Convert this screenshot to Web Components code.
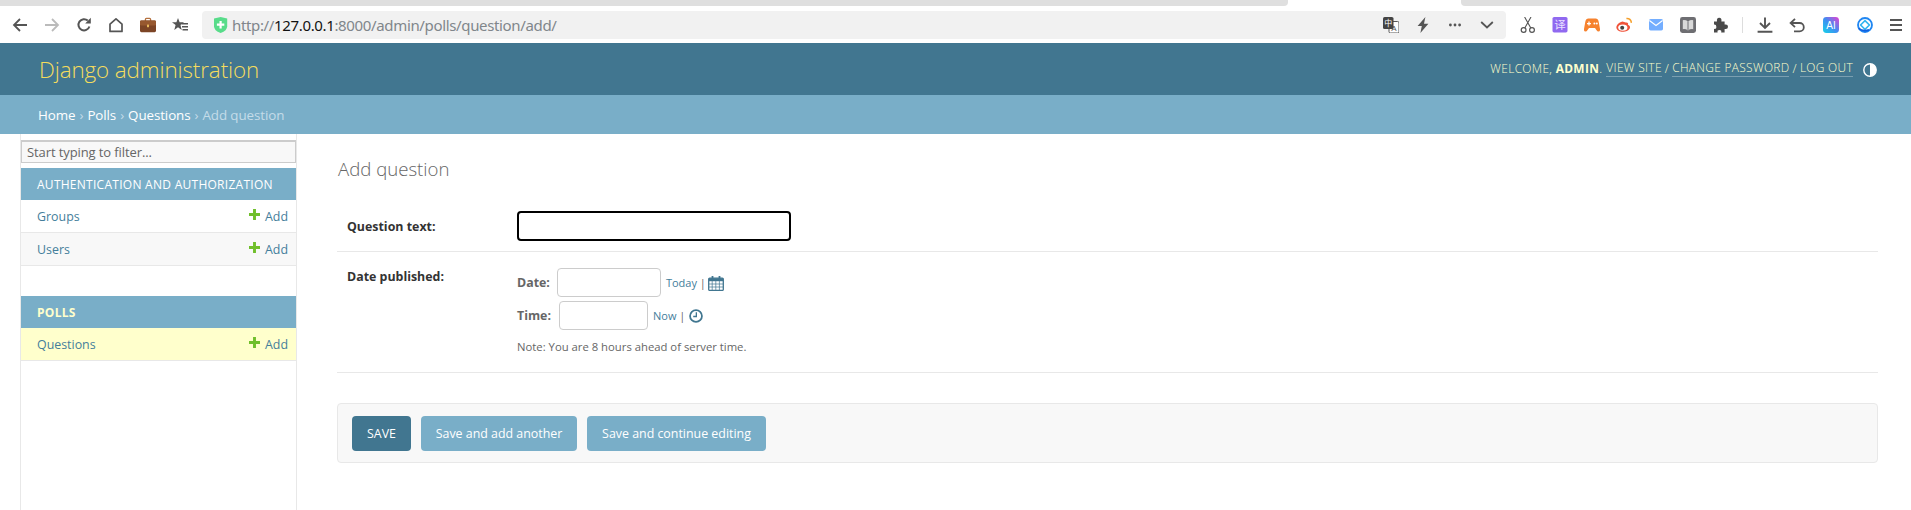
<!DOCTYPE html>
<html lang="en">
<head>
<meta charset="utf-8">
<title>Add question | Django site admin</title>
<style>
  html, body { margin: 0; height: 510px; overflow: hidden; background: #fff; }
  body { font-family: "Open Sans", "Noto Sans CJK SC", sans-serif; font-size: 13px; color: #333; }
  .title { margin: 0 0 20px; padding-left: 1px; font: 300 18.6px/24px "Open Sans", sans-serif; color: #666; }
  .note { font-size: 11.3px; line-height: 16px; color: #666; margin: 0; padding-top: 5px; font-family: "Open Sans", sans-serif; }
</style>
</head>
<body>
  <browser-bar url-scheme="http://" url-host="127.0.0.1" url-rest=":8000/admin/polls/question/add/"></browser-bar>
  <admin-header title="Django administration" user="admin"></admin-header>
  <admin-crumbs current="Add question">
    <a>Home</a><a>Polls</a><a>Questions</a>
  </admin-crumbs>
  <admin-page>
    <admin-nav slot="nav">
      <nav-module caption="Authentication and Authorization">
        <nav-row name="Groups"></nav-row>
        <nav-row name="Users" alt></nav-row>
      </nav-module>
      <nav-module caption="Polls" current>
        <nav-row name="Questions" current></nav-row>
      </nav-module>
    </admin-nav>
    <h1 class="title">Add question</h1>
    <form-row label="Question text:" style="--label-top:7px">
      <text-field focused style="--w:274px"></text-field>
    </form-row>
    <form-row label="Date published:" style="--row-top:16px;--row-bottom:17px">
      <date-line label="Date:" link="Today" icon="calendar" style="--w:104px;--gap:7px;--icon:16px;--icon-gap:2px"></date-line>
      <date-line label="Time:" link="Now" icon="clock" style="--w:89px;--gap:8px;--icon:14px;--icon-gap:4px"></date-line>
      <p class="note">Note: You are 8 hours ahead of server time.</p>
    </form-row>
    <submit-row>
      <admin-button primary style="--w:59px">SAVE</admin-button>
      <admin-button style="--w:156px">Save and add another</admin-button>
      <admin-button style="--w:179px">Save and continue editing</admin-button>
    </submit-row>
  </admin-page>

<script>
  'use strict';

  const FONT = '"Open Sans", "Noto Sans CJK SC", sans-serif';

  /* toolbar icons, all on a 16x16 box */
  const ICONS = {
    back: '<path d="M15 8H2M8 2 2 8l6 6" fill="none" stroke="#555" stroke-width="1.8"/>',
    forward: '<path d="M1 8h13M8 2l6 6-6 6" fill="none" stroke="#bbb" stroke-width="1.8"/>',
    reload: '<path d="M13.4 9.5A5.6 5.6 0 1 1 11.8 3.6" fill="none" stroke="#555" stroke-width="2"/><path d="M9.2 6.4 14.8 6.4 14.8 .8z" fill="#555"/>',
    home: '<path d="M2 14.4V7.2L8 1.8l6 5.4v7.2z" fill="none" stroke="#555" stroke-width="1.7" stroke-linejoin="round"/>',
    briefcase: '<path d="M5.4 4V2.4q0-1 1-1h3.2q1 0 1 1V4" fill="none" stroke="#b5713f" stroke-width="1.3"/><rect y="3.6" width="16" height="11.6" rx="1.4" fill="#7c4425"/><rect y="3.6" width="16" height="5" rx="1.4" fill="#97582f"/><rect x="7" y="7.6" width="2" height="2.6" fill="#e8b75a"/>',
    starlist: '<path d="M6 1 7.6 5.2H12L8.5 8l1.2 5L6 10.2 2.3 13l1.3-5L0 5.2h4.4z" fill="#555"/><path d="M9.5 6.8H16M10 9.8H16M10.5 12.8H16" stroke="#555" stroke-width="1.4"/>',
    shield: '<path d="M0 1.6 6.6 0l6.6 1.6v7.6Q13.2 13.6 6.6 16 0 13.6 0 9.2z" fill="#58dc8a"/><path d="M6.6 4v7.4M2.9 7.7h7.4" stroke="#fff" stroke-width="2.2"/>',
    translate: '<rect x="6" y="4.5" width="10" height="11.5" rx="1.4" fill="#fff" stroke="#555"/><text x="11" y="14" font-size="8" text-anchor="middle" fill="#555" font-family="Liberation Sans, sans-serif">A</text><rect width="10.5" height="12" rx="1.6" fill="#444"/><text x="5.2" y="9" font-size="8" text-anchor="middle" fill="#fff" font-family="Noto Sans CJK SC, sans-serif">中</text>',
    bolt: '<path d="M10.4 0 2.6 9h4.2L5.4 16l8-9.2H9z" fill="#555"/>',
    dots: '<circle cx="3.4" cy="8" r="1.4" fill="#555"/><circle cx="8" cy="8" r="1.4" fill="#555"/><circle cx="12.6" cy="8" r="1.4" fill="#555"/>',
    chevron: '<path d="M2.2 5 8 10.4 13.8 5" fill="none" stroke="#555" stroke-width="1.8"/>',
    scissors: '<circle cx="3.6" cy="13" r="2.4" fill="none" stroke="#555" stroke-width="1.2"/><circle cx="12" cy="13" r="2.4" fill="none" stroke="#555" stroke-width="1.2"/><path d="M4.8 11 11 0M10.8 11 4.6 0" stroke="#555" stroke-width="1.1"/>',
    yi: '<rect width="15" height="15.4" rx="1.6" x=".5" fill="#9069f0"/><text x="8" y="12.4" font-size="11.5" text-anchor="middle" fill="#e9e0ff" font-family="Noto Sans CJK SC, sans-serif">译</text>',
    game: '<path d="M4.4 1.6h7.2q2.4 0 3.1 3.2L16 12q.3 2.6-1.6 2.6-1 0-2-1.6L11 11H5l-1.4 2q-1 1.6-2 1.6Q-.3 14.6 0 12l1.3-7.2Q2 1.6 4.4 1.6z" fill="#f6822e"/><path d="M5 4.6v4M3 6.6h4" stroke="#fff" stroke-width="1.3"/><circle cx="10.4" cy="6.6" r="1" fill="#fff"/><circle cx="12.8" cy="6.6" r="1" fill="#fff"/>',
    weibo: '<path d="M6.4 4.4C2.8 5.2 0 8.4 .4 10.8c.5 3 4 4.4 7.4 4 3.4-.4 6.4-2.4 6.2-4.8-.1-1.4-1.6-1.8-2-2.2.6-1.6-.3-2.6-2.2-2.2z" fill="#f0533a"/><ellipse cx="6.8" cy="10.6" rx="4.6" ry="3.2" fill="#fff"/><circle cx="6.2" cy="10.8" r="2" fill="#444"/><path d="M10.4 1.6q4.4-.4 5 4.2" fill="none" stroke="#f5a02c" stroke-width="1.5"/>',
    mail: '<rect y="2" width="14" height="11.4" x="1" rx="1.6" fill="#74aeff"/><path d="M1.4 3.6 8 8.4l6.6-4.8" fill="none" stroke="#fff" stroke-width="1.2"/>',
    book: '<rect width="16" height="16" rx="2.4" fill="#6e6e72"/><path d="M8 4.4Q5.6 2.8 2.8 3.2v9Q5.6 11.8 8 13.4q2.4-1.6 5.2-1.2v-9Q10.4 2.8 8 4.4z" fill="#d9d9d9"/><path d="M8 4.4v9" stroke="#6e6e72"/>',
    puzzle: '<path d="M2 4.4h3q-.6-3.6 2.2-3.6T9.4 4.4h3.2v3.2q3.4-.6 3.4 2.2t-3.4 2.2v3.4H9.2q.6-2.4-1.8-2.4t-1.8 2.4H2v-3.6q2.4.6 2.4-1.9T2 7.6z" fill="#4a4a4a"/>',
    download: '<path d="M8 .6v10M3 6l5 5 5-5M.6 14.8h14.8" fill="none" stroke="#555" stroke-width="1.9"/>',
    undo: '<path d="M2.4 6h8.2a3.8 3.8 0 0 1 0 8.4H5" fill="none" stroke="#555" stroke-width="1.8"/><path d="M6 1.8 1.6 6 6 10.2" fill="none" stroke="#555" stroke-width="1.8"/>',
    ai: '<defs><linearGradient id="g" x1="0" y1="1" x2="1" y2="0"><stop offset="0" stop-color="#16d3e8"/><stop offset=".5" stop-color="#3f8df2"/><stop offset="1" stop-color="#e83fd0"/></linearGradient></defs><rect width="16" height="16" rx="3.4" fill="url(#g)"/><text x="8" y="11.8" font-size="10" text-anchor="middle" fill="#fff" font-family="Liberation Sans, sans-serif">AI</text>',
    orbit: '<circle cx="8" cy="8" r="7" fill="none" stroke="#1f86f2" stroke-width="1.8"/><path d="M8 3.6 12.4 8 8 12.4 3.6 8z" fill="none" stroke="#31b5f0" stroke-width="1.6"/><path d="M1.6 11.4Q6 15 12 12.8" fill="none" stroke="#1060e0" stroke-width="1.8"/>',
    menu: '<path d="M2 3h12M2 8h12M2 13h12" stroke="#555" stroke-width="1.9"/>',
    calendar: '<rect x=".7" y="3.2" width="14.6" height="12.2" rx="1" fill="none" stroke="#417690" stroke-width="1.3"/><path d="M.7 3.2h14.6v3H.7z" fill="#417690"/><path d="M4.5 1v3M11.5 1v3" stroke="#417690" stroke-width="1.8"/><path d="M1 9h14M1 12h14M4.2 6v9M7.8 6v9M11.4 6v9" stroke="#417690" stroke-width=".7"/>',
    clock: '<circle cx="8" cy="8" r="6.8" fill="none" stroke="#417690" stroke-width="2"/><path d="M8.4 3.8v4.8H4.8" fill="none" stroke="#417690" stroke-width="1.5"/>',
    plus: '<path d="M6 .6v10.8M.6 6h10.8" stroke="#70bf2b" stroke-width="3.2" stroke-linecap="round"/>'
  };

  function shadow(host, html) {
    host.attachShadow({ mode: 'open' }).innerHTML = html;
  }

  /* ── single svg icon, square box of --size ── */
  class ToolIcon extends HTMLElement {
    connectedCallback() {
      const name = this.getAttribute('name');
      const box = name === 'plus' ? '0 0 12 12' : '0 0 16 16';
      shadow(this, `
        <style>
          :host { display: inline-flex; flex: none; width: var(--size, 16px); height: var(--size, 16px); }
          svg { width: 100%; height: 100%; display: block; }
        </style>
        <svg viewBox="${box}" aria-hidden="true">${ICONS[name] || ''}</svg>`);
    }
  }
  customElements.define('tool-icon', ToolIcon);

  /* ── browser chrome: tab strip, toolbar, address bar ── */
  class BrowserBar extends HTMLElement {
    connectedCallback() {
      const btn = (n, extra) => `<span class="btn ${extra || ''}"><tool-icon name="${n}"></tool-icon></span>`;
      shadow(this, `
        <style>
          :host { display: block; height: 43px; background: #fff; overflow: hidden; }
          .strip { display: flex; height: 6px; background: #fff; }
          .tabs { background: #dfdfdf; }
          .tabs.left { width: 1288px; border-bottom-right-radius: 4px; }
          .tabs.right { margin-left: 173px; flex: 1; border-bottom-left-radius: 4px; }
          .tools { display: flex; align-items: center; height: 37px; padding-left: 4px; }
          .btn { display: flex; align-items: center; justify-content: center; width: 32px; height: 28px; flex: none; }
          .url {
            flex: 1; display: flex; align-items: center; height: 28px; margin: 0 6px; padding: 0 3px 0 12px;
            background: #f1f1f1; border-radius: 4px; min-width: 0;
          }
          .shield { --size: 16px; margin-right: 2px; }
          .addr { flex: 1; font: 15px/28px "Noto Sans", ${FONT}; color: #80868b; white-space: nowrap; letter-spacing: -.35px; }
          .addr b { font-weight: 400; color: #111; }
          .sep { width: 1px; height: 16px; background: #ddd; margin: 0 6px; flex: none; }
          .gap { margin-left: 2px; }
          .last { width: 30px; }
        </style>
        <div class="strip"><div class="tabs left"></div><div class="tabs right"></div></div>
        <div class="tools">
          ${btn('back')}${btn('forward')}${btn('reload')}${btn('home')}${btn('briefcase')}${btn('starlist')}
          <div class="url">
            <tool-icon class="shield" name="shield"></tool-icon>
            <span class="addr">${this.getAttribute('url-scheme')}<b>${this.getAttribute('url-host')}</b>${this.getAttribute('url-rest')}</span>
            ${btn('translate')}${btn('bolt')}${btn('dots')}${btn('chevron')}
          </div>
          ${btn('scissors')}${btn('yi')}${btn('game')}${btn('weibo')}${btn('mail')}${btn('book')}${btn('puzzle')}
          <span class="sep"></span>
          ${btn('download')}${btn('undo')}${btn('ai', 'gap')}${btn('orbit', 'gap')}${btn('menu', 'last')}
        </div>`);
    }
  }
  customElements.define('browser-bar', BrowserBar);

  /* ── teal header ── */
  class AdminHeader extends HTMLElement {
    connectedCallback() {
      shadow(this, `
        <style>
          :host {
            display: flex; align-items: center; justify-content: space-between; box-sizing: border-box;
            height: 52px; padding: 0 34px 0 39px; background: #417690; color: #ffc; font-family: ${FONT};
          }
          .brand { font-size: 22.4px; font-weight: 300; color: #f5dd5d; letter-spacing: -.1px; }
          .tools { display: flex; align-items: center; font-size: 11.9px; text-transform: uppercase; letter-spacing: .34px; font-weight: 300; margin-top: -2px; }
          .tools b { font-weight: 700; }
          .tools a { border-bottom: 1px solid rgba(255,255,255,.3); padding-bottom: 1px; margin: 0 3px; }
          .user { margin-right: 1px; }
          svg { width: 14px; height: 14px; margin-left: 7px; margin-top: 3px; display: block; }
        </style>
        <div class="brand">${this.getAttribute('title')}</div>
        <div class="tools">
          <span class="user">Welcome, <b>${this.getAttribute('user')}</b>.</span>
          <a>View site</a>/<a>Change password</a>/<a>Log out</a>
          <svg viewBox="0 0 14 14"><circle cx="7" cy="7" r="6.2" fill="#417690" stroke="#fff" stroke-width="1.4"/><path d="M7 .8a6.2 6.2 0 0 1 0 12.4z" fill="#fff"/></svg>
        </div>`);
    }
  }
  customElements.define('admin-header', AdminHeader);

  class AdminCrumbs extends HTMLElement {
    connectedCallback() {
      const links = [...this.querySelectorAll('a')].map(a => a.textContent);
      const sep = '<i>›</i>';
      shadow(this, `
        <style>
          :host {
            display: flex; align-items: center; box-sizing: border-box; height: 39px; padding: 0 0 0 38px;
            background: #79aec8; color: #c4dce8; font: 13.4px ${FONT}; letter-spacing: -.1px;
          }
          a { color: #fff; }
          i { font-style: normal; margin: 0 4px; }
        </style>
        ${links.map(t => `<a>${t}</a>`).join(sep)}${sep}${this.getAttribute('current')}`);
    }
  }
  customElements.define('admin-crumbs', AdminCrumbs);

  /* ── sidebar + content columns ── */
  class AdminPage extends HTMLElement {
    constructor() {
      super();
      shadow(this, `
        <style>
          :host { display: flex; height: 376px; overflow: hidden; }
          .side { flex: none; margin-left: 20px; }
          .body { flex: 1; min-width: 0; padding: 23px 33px 0 40px; }
        </style>
        <div class="side"><slot name="nav"></slot></div>
        <div class="body"><slot></slot></div>`);
    }
  }
  customElements.define('admin-page', AdminPage);

  class AdminNav extends HTMLElement {
    constructor() {
      super();
      shadow(this, `
        <style>
          :host {
            display: block; box-sizing: border-box; width: 277px; height: 376px;
            border-left: 1px solid #e8e8e8; border-right: 1px solid #e8e8e8; padding-top: 6px;
          }
          input {
            display: block; box-sizing: border-box; width: 275px; height: 23px; margin: 0 0 5px; padding: 0 5px;
            border: 1px solid #ccc; border-width: 2px 1px 1px; background: #f8f8f8; border-radius: 0; font: 13px ${FONT}; letter-spacing: -.1px;
          }
          input::placeholder { color: #666; opacity: 1; }
        </style>
        <input type="text" placeholder="Start typing to filter...">
        <slot></slot>`);
    }
  }
  customElements.define('admin-nav', AdminNav);

  class NavModule extends HTMLElement {
    connectedCallback() {
      const cur = this.hasAttribute('current');
      shadow(this, `
        <style>
          :host { display: block; margin-bottom: 30px; }
          .cap {
            box-sizing: border-box; height: 32px; padding: 0 16px; background: #79aec8; white-space: nowrap;
            font: ${cur ? 700 : 400} 12px/33px ${FONT}; letter-spacing: .27px; text-transform: uppercase;
            color: ${cur ? '#ffc' : '#fff'};
          }
        </style>
        <div class="cap">${this.getAttribute('caption')}</div>
        <slot></slot>`);
    }
  }
  customElements.define('nav-module', NavModule);

  class NavRow extends HTMLElement {
    connectedCallback() {
      shadow(this, `
        <style>
          :host {
            display: flex; align-items: center; justify-content: space-between; box-sizing: border-box;
            height: 33px; padding: 0 8px 0 16px; border-bottom: 1px solid #e8e8e8;
            font: 12.4px ${FONT}; color: #447e9b; background: #fff;
          }
          :host([alt]) { background: #f8f8f8; }
          :host([current]) { background: #ffc; }
          .add { display: flex; align-items: center; gap: 5px; }
          tool-icon { --size: 11px; margin-top: -3px; }
        </style>
        <span>${this.getAttribute('name')}</span>
        <span class="add"><tool-icon name="plus"></tool-icon>Add</span>`);
    }
  }
  customElements.define('nav-row', NavRow);

  /* ── one row of the change form ── */
  class FormRow extends HTMLElement {
    connectedCallback() {
      shadow(this, `
        <style>
          :host {
            display: flex; box-sizing: border-box; padding: var(--row-top, 10px) 0 var(--row-bottom, 10px) 10px;
            border-bottom: 1px solid #e8e8e8; font-family: ${FONT};
          }
          label { flex: none; width: 170px; padding-top: var(--label-top, 0); font-size: 12.4px; line-height: 18px; font-weight: 700; color: #333; }
          .field { min-width: 0; }
        </style>
        <label>${this.getAttribute('label')}</label>
        <div class="field"><slot></slot></div>`);
    }
  }
  customElements.define('form-row', FormRow);

  class TextField extends HTMLElement {
    connectedCallback() {
      shadow(this, `
        <style>
          :host { display: block; width: var(--w); }
          input {
            display: block; box-sizing: border-box; width: 100%; height: 30px; padding: 0 6px; margin: 0;
            border: 1px solid #ccc; border-radius: 4px; background: #fff; outline: 0;
          }
          input.focused { border: 2px solid #000; }
        </style>
        <input type="text" class="${this.hasAttribute('focused') ? 'focused' : ''}">`);
    }
  }
  customElements.define('text-field', TextField);

  /* ── Date: [input] Today | icon ── */
  class DateLine extends HTMLElement {
    connectedCallback() {
      shadow(this, `
        <style>
          :host { display: flex; align-items: center; height: 29px; margin-bottom: 4px; font: 12px ${FONT}; color: #666; }
          b { font-size: 12.4px; font-weight: 700; color: #666; margin-right: var(--gap); }
          input {
            box-sizing: border-box; width: var(--w); height: 29px; margin: 0 5px 0 0; padding: 0 6px;
            border: 1px solid #ccc; border-radius: 4px; background: #fff;
          }
          .link { font-size: 11px; color: #447e9b; margin-right: var(--icon-gap); }
          .link i { font-style: normal; color: #666; }
          tool-icon { --size: var(--icon); }
        </style>
        <b>${this.getAttribute('label')}</b>
        <input type="text">
        <span class="link">${this.getAttribute('link')} <i>|</i></span>
        <tool-icon name="${this.getAttribute('icon')}"></tool-icon>`);
    }
  }
  customElements.define('date-line', DateLine);

  /* ── grey action panel ── */
  class SubmitRow extends HTMLElement {
    constructor() {
      super();
      shadow(this, `
        <style>
          :host {
            display: flex; gap: 10px; box-sizing: border-box; height: 60px; margin-top: 30px; padding: 12px 14px;
            background: #f8f8f8; border: 1px solid #e8e8e8; border-radius: 4px;
          }
        </style>
        <slot></slot>`);
    }
  }
  customElements.define('submit-row', SubmitRow);

  class AdminButton extends HTMLElement {
    constructor() {
      super();
      shadow(this, `
        <style>
          :host {
            display: flex; align-items: center; justify-content: center; flex: none; box-sizing: border-box;
            width: var(--w); height: 35px; border-radius: 4px; background: #79aec8; color: #fff; font: 12.4px ${FONT};
          }
          :host([primary]) { background: #417690; }
        </style>
        <slot></slot>`);
    }
  }
  customElements.define('admin-button', AdminButton);
</script>
</body>
</html>
